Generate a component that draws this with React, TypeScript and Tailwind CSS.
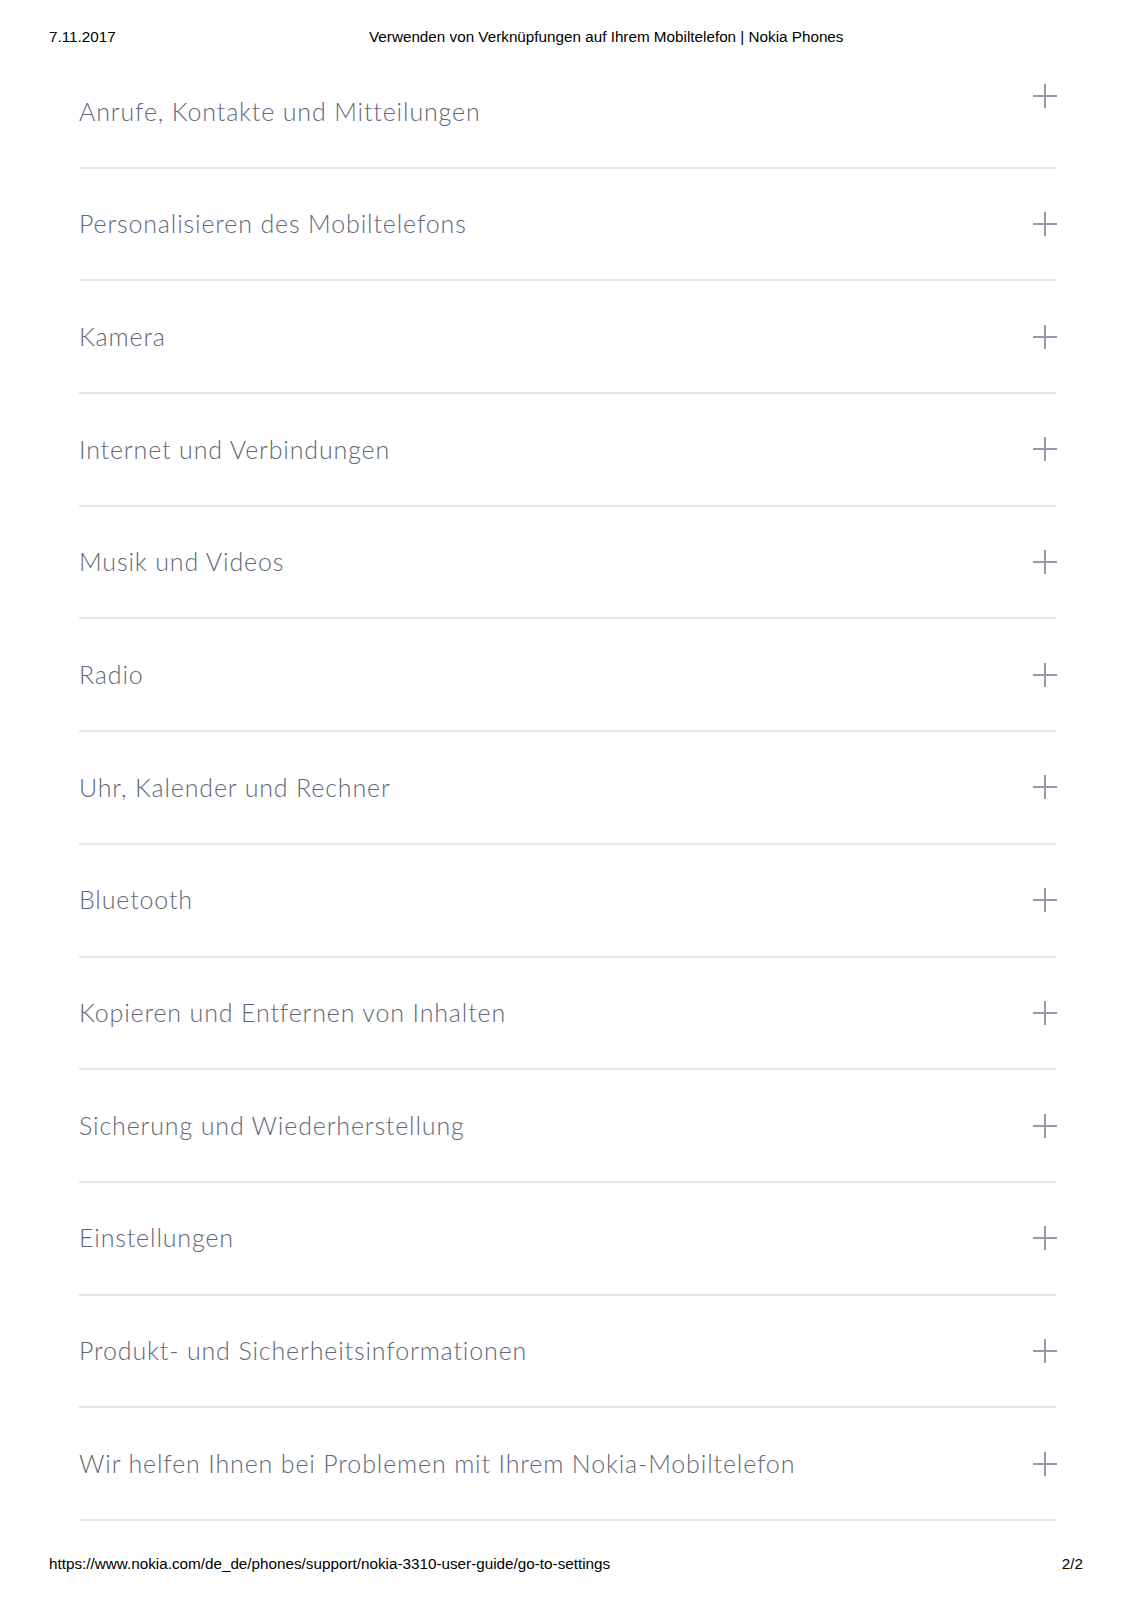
const topics = [
  "Anrufe, Kontakte und Mitteilungen",
  "Personalisieren des Mobiltelefons",
  "Kamera",
  "Internet und Verbindungen",
  "Musik und Videos",
  "Radio",
  "Uhr, Kalender und Rechner",
  "Bluetooth",
  "Kopieren und Entfernen von Inhalten",
  "Sicherung und Wiederherstellung",
  "Einstellungen",
  "Produkt- und Sicherheitsinformationen",
  "Wir helfen Ihnen bei Problemen mit Ihrem Nokia-Mobiltelefon",
];

const PlusIcon = ({ className }: { className?: string }) => (
  <svg
    xmlns="http://www.w3.org/2000/svg"
    viewBox="0 0 24 24"
    className={className}
    fill="none"
    stroke="currentColor"
    strokeWidth="2"
  >
    <path d="M12 0v24M0 12h24" />
  </svg>
);

export default function App() {
  return (
    <div className="w-[1132px] h-[1601px] overflow-hidden bg-white font-['Liberation_Sans',Arial,sans-serif]">
      {/* print header */}
      <header className="flex pl-[49px] pt-[28px] mb-[10px] text-[15.25px] leading-[18px] text-black">
        <span className="w-[320px]">7.11.2017</span>
        <span>Verwenden von Verknüpfungen auf Ihrem Mobiltelefon | Nokia Phones</span>
      </header>

      <ul className="ml-[79px] w-[977px]">
        {topics.map((topic, i) => (
          <li
            key={topic}
            className="flex h-[112.7px] items-center justify-between border-b-2 border-[#e6e6e6]"
          >
            <span className="font-['Lato','Open_Sans',sans-serif] font-light text-[25px] tracking-[0.85px] text-[#626878]">
              {topic}
            </span>
            <PlusIcon
              className={
                i === 0
                  ? "h-6 w-6 mr-[-1px] text-[#959aa8] -translate-y-[15px]"
                  : "h-6 w-6 mr-[-1px] text-[#959aa8]"
              }
            />
          </li>
        ))}
      </ul>

      {/* print footer */}
      <footer className="flex justify-between pl-[49px] pr-[49px] mt-[34px] text-[15.25px] leading-[18px] text-black">
        <span>https://www.nokia.com/de_de/phones/support/nokia-3310-user-guide/go-to-settings</span>
        <span>2/2</span>
      </footer>
    </div>
  );
}
